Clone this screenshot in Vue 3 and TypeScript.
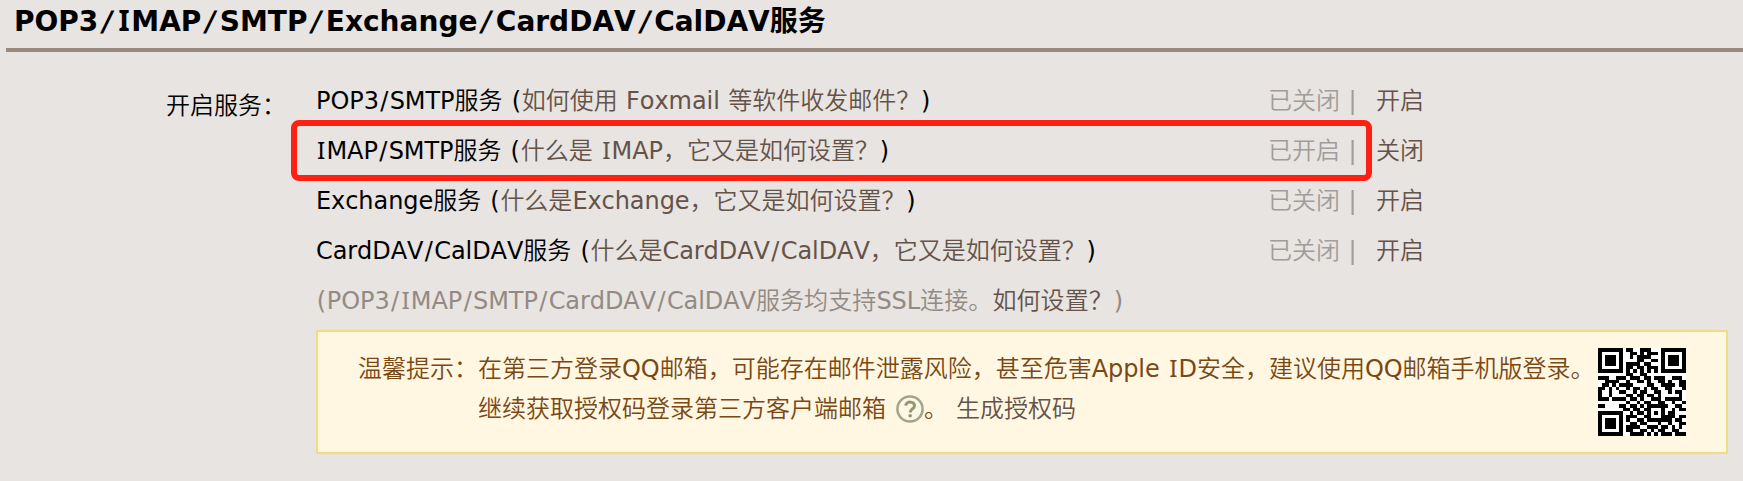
<script setup lang="ts">
import { h } from 'vue'

interface Service { name: string; help: string; status: string; action: string; marked?: boolean }
const services: Service[] = [
  { name: 'POP3/SMTP服务', help: '如何使用 Foxmail 等软件收发邮件？', status: '已关闭', action: '开启' },
  { name: 'IMAP/SMTP服务', help: '什么是 IMAP，它又是如何设置？', status: '已开启', action: '关闭', marked: true },
  { name: 'Exchange服务', help: '什么是Exchange，它又是如何设置？', status: '已关闭', action: '开启' },
  { name: 'CardDAV/CalDAV服务', help: '什么是CardDAV/CalDAV，它又是如何设置？', status: '已关闭', action: '开启' },
]

// Mixed-script text: Latin runs get their own weight, with air around slashes, brackets and capital I
const classOf = (part: string): string => {
  if (part === '/') return 'slash'
  if (part === 'I') return 'cap-i'
  if (part === '(' || part === ')') return 'paren'
  return 'latin'
}
const Mixed = (props: { text: string }) =>
  h('span', props.text.split(/([/()I]|[A-HJ-Za-z0-9]+)/).filter(Boolean).map((part) => (/^[/()A-Za-z0-9]+$/.test(part) ? h('span', { class: classOf(part) }, part) : part)))
Mixed.props = ['text']

const qr: string[] = [
  '1111111011001110001111111',
  '1000001001101011101000001',
  '1011101001011110001011101',
  '1011101000011001101011101',
  '1011101011110110001011101',
  '1000001011011011101000001',
  '1111111010101010101111111',
  '0000000011001100000000000',
  '1110011101110110111001110',
  '0011110010011010011010011',
  '0110101111000011001111011',
  '1101010010110101100110001',
  '1001001100101100110010110',
  '1001000011011011010000010',
  '1110111101101001110111110',
  '0000000010010110011001001',
  '1100001101101011111100110',
  '0000000110110110001001011',
  '1111111001011010101011000',
  '1000001011100110001111011',
  '1011101010011011111110110',
  '1011101001101100010010011',
  '1011101011110011101101010',
  '1000001011001101011001100',
  '1111111001111010101110111',
]
const qrPath = qr.map((r, y) => [...r].map((c, x) => (c === '1' ? `M${x} ${y}h1v1h-1z` : '')).join('')).join('')
</script>

<template>
  <main class="page">
    <h1 class="title"><Mixed text="POP3/IMAP/SMTP/Exchange/CardDAV/CalDAV服务" /></h1>
    <div class="body">
      <div class="label">开启服务：</div>
      <div class="content">
        <div v-for="s in services" :key="s.name" class="row" :class="{ marked: s.marked }">
          <div class="name"><Mixed :text="s.name" /> <Mixed text="(" /><a class="help"><Mixed :text="s.help" /></a><Mixed text=")" /></div>
          <div class="status">{{ s.status }} <span class="bar">|</span></div>
          <a class="action">{{ s.action }}</a>
        </div>
        <div class="row note"><Mixed text="(POP3/IMAP/SMTP/CardDAV/CalDAV服务均支持SSL连接。" /><a class="link">如何设置？</a><Mixed text=")" /></div>
        <section class="tip">
          <div class="tip-label">温馨提示：</div>
          <div class="tip-text">
            <div><Mixed text="在第三方登录QQ邮箱，可能存在邮件泄露风险，甚至危害Apple ID安全，建议使用QQ邮箱手机版登录。" /></div>
            <div class="line2">
              <span>继续获取授权码登录第三方客户端邮箱</span>
              <svg class="q" viewBox="0 0 28 28"><circle cx="14" cy="14" r="12.6" fill="#fbf8e6" stroke="#a3a488" stroke-width="2.5" /><path d="M9.7 10.6c.3-4.7 8.9-4.6 8.8.1 0 3.2-4.3 3.2-4.3 6.9" fill="none" stroke="#969672" stroke-width="3" /><circle cx="14.2" cy="20.8" r="1.8" fill="#969672" /></svg>
              <span class="stop">。</span>
              <a class="gen">生成授权码</a>
            </div>
          </div>
          <svg class="qr" viewBox="0 0 25 25" shape-rendering="crispEdges"><rect width="25" height="25" fill="#fff" /><path :d="qrPath" fill="#000" /></svg>
        </section>
      </div>
    </div>
  </main>
</template>

<style>
body { margin: 0; background: #e7e4e1; }
.latin, .slash, .paren, .cap-i { font-weight: 400; letter-spacing: -.07px; }
.slash { padding: 0 1.4px; }
.paren { padding: 0 .75px; }
.cap-i { padding: 0 .045em; font-family: "Noto Sans", sans-serif; font-size: 1.02em; line-height: 0; }
h1 .latin, h1 .slash, h1 .cap-i { font-weight: 700; letter-spacing: 0; }
h1 .slash { display: inline-block; padding: 0 4.1px; line-height: 1; transform: skewX(-10deg); }
h1 .cap-i { padding: 0 .06em; }
</style>
<style scoped>
.page { box-sizing: border-box; width: 1743px; height: 481px; overflow: hidden; padding-left: 6px; background: #e7e4e1; color: #000; font: 350 24px/50px "DejaVu Sans", "Noto Sans CJK SC", sans-serif; font-kerning: none; word-spacing: .8px; white-space: nowrap; }
.title { box-sizing: border-box; height: 52px; margin: 0; padding-left: 8px; border-bottom: 4px solid #988a7c; font-size: 28px; line-height: 43px; font-weight: 700; }
.body { display: flex; padding-top: 24px; }
.label { width: 310px; padding: 5px 0 0 160px; box-sizing: border-box; }
.content { width: 1412px; }
.row { position: relative; display: flex; height: 50px; line-height: 51px; }
.name { width: 952px; }
.help, .action, .link { color: #655248; }
.status { width: 108px; color: #a09d9a; }
.bar { font-weight: 400; }
.marked::before { content: ""; position: absolute; left: -25px; top: -6px; width: 1069px; height: 49px; border: 6px solid #fd2114; border-radius: 8px; }
.note { color: #938b83; letter-spacing: .1px; }
.tip { box-sizing: border-box; display: flex; height: 124px; margin-top: 4px; padding: 17px 0 0 40px; border: 2px solid #efdc85; background: #fff7e1; color: #7a4815; line-height: 41px; }
.tip-label { width: 120px; }
.tip-text { width: 1120px; }
.line2 { display: flex; align-items: center; height: 40px; margin-top: -1px; }
.q { width: 28px; height: 28px; margin-left: 10px; }
.stop { width: 32px; }
.gen { color: #655248; }
.qr { width: 88px; height: 88px; margin-top: -1px; }
</style>
